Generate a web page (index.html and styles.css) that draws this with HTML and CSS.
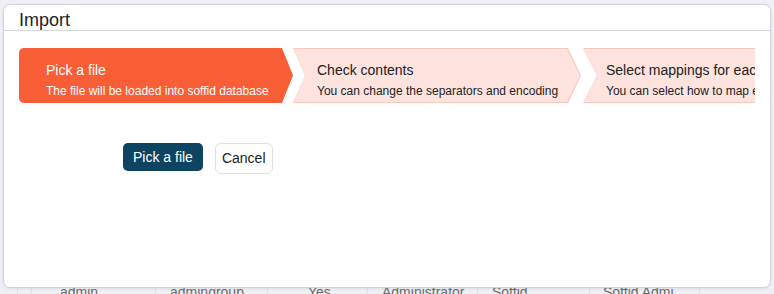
FILE: index.html
```html
<!DOCTYPE html>
<html>
<head>
<meta charset="utf-8">
<link rel="stylesheet" href="styles.css">
</head>
<body>
<div class="page">
  <div class="topline"></div>
  <div class="table-row">
    <div class="cell c0"></div>
    <div class="cell c1"></div>
    <div class="cell c2">admin</div>
    <div class="cell c3">admingroup</div>
    <div class="cell c4">Yes</div>
    <div class="cell c5">Administrator</div>
    <div class="cell c6">Soffid</div>
    <div class="cell c7">Soffid Admi</div>
    <div class="cell c8"></div>
  </div>
</div>

<div class="modal">
  <div class="modal-header">Import</div>
  <div class="modal-body">
    <div class="steps">
      <div class="step step-active">
        <div class="step-title">Pick a file</div>
        <div class="step-sub">The file will be loaded into soffid database</div>
      </div>
      <div class="step step-pending step-mid">
        <div class="step-inner">
          <div class="step-title">Check contents</div>
          <div class="step-sub">You can change the separators and encoding</div>
        </div>
      </div>
      <div class="step step-pending step-last">
        <div class="step-inner">
          <div class="step-title">Select mappings for each column</div>
          <div class="step-sub">You can select how to map each column</div>
        </div>
      </div>
    </div>
    <div class="actions">
      <button class="btn btn-primary">Pick a file</button>
      <button class="btn btn-default">Cancel</button>
    </div>
  </div>
</div>
</body>
</html>
```

FILE: styles.css
```css
html, body {
  margin: 0;
  padding: 0;
}
body {
  width: 774px;
  height: 294px;
  overflow: hidden;
  background: #eef0f5;
  font-family: "Liberation Sans", Arial, sans-serif;
}
.page {
  height: 294px;
  display: flex;
  flex-direction: column;
}
.topline {
  height: 3px;
  background: #e3e5ea;
}
.table-row {
  margin-top: 282px;
  display: flex;
  height: 20px;
  font-size: 14px;
  color: #6b6b6b;
  line-height: 20px;
}
.cell {
  border-right: 1px solid #dfe2e8;
  box-sizing: border-box;
  white-space: nowrap;
  overflow: hidden;
}
.c0 { width: 18px; }
.c1 { width: 14px; }
.c2 { width: 124px; padding-left: 28px; }
.c3 { width: 112px; padding-left: 14px; }
.c4 { width: 100px; padding-left: 40px; }
.c5 { width: 110px; padding-left: 14px; }
.c6 { width: 112px; padding-left: 14px; }
.c7 { width: 110px; padding-left: 13px; }
.c8 { width: 74px; border-right: none; }

.modal {
  position: absolute;
  left: 3px;
  top: 4px;
  width: 768px;
  height: 284px;
  box-sizing: border-box;
  background: #fff;
  border: 1px solid #d2d4d8;
  border-radius: 7px;
  box-shadow: 0 1px 3px rgba(0,0,0,0.08);
  overflow: hidden;
}
.modal-header {
  height: 26px;
  box-sizing: border-box;
  padding-top: 3px;
  line-height: 24px;
  padding-left: 15px;
  font-size: 18px;
  color: #222;
  border-bottom: 1px solid #d6d8dc;
}
.modal-body {
  padding: 17px 0 0 15px;
}
.steps {
  display: flex;
  width: 736px;
  height: 55px;
  overflow: hidden;
}
.step {
  flex: none;
  height: 55px;
  box-sizing: border-box;
  display: flex;
  flex-direction: column;
}
.step-title {
  font-size: 14px;
  line-height: 18px;
}
.step-sub {
  font-size: 12px;
  line-height: 16px;
  margin-top: 4px;
  white-space: nowrap;
}
.step-active {
  width: 274px;
  background: #fa5e37;
  color: #fff;
  padding-left: 27px;
  padding-top: 13px;
  border-radius: 5px 0 0 5px;
  clip-path: polygon(0 0, calc(100% - 11px) 0, 100% 50%, calc(100% - 11px) 100%, 0 100%);
}
.step-pending {
  background: #f9c8bb;
  padding: 1px;
  color: #222;
}
.step-inner {
  height: 100%;
  box-sizing: border-box;
  padding-top: 12px;
  background: #fee3de;
  display: flex;
  flex-direction: column;
  white-space: nowrap;
}
.step-mid {
  width: 288px;
  margin-right: 2px;
  clip-path: polygon(0 0, calc(100% - 13px) 0, 100% 50%, calc(100% - 13px) 100%, 0 100%, 12px 50%);
}
.step-mid .step-inner {
  padding-left: 23px;
  clip-path: polygon(0 0, calc(100% - 13px) 0, 100% 50%, calc(100% - 13px) 100%, 0 100%, 11px 50%);
}
.step-last {
  width: 300px;
  clip-path: polygon(0 0, 100% 0, 100% 100%, 0 100%, 14px 50%);
}
.step-last .step-inner {
  padding-left: 22px;
  clip-path: polygon(0 0, 100% 0, 100% 100%, 0 100%, 13px 50%);
}
.actions {
  display: flex;
  align-items: flex-start;
  gap: 12px;
  margin-top: 40px;
  padding-left: 104px;
}
.btn {
  font-family: "Liberation Sans", Arial, sans-serif;
  font-size: 14px;
  margin: 0;
  cursor: pointer;
}
.btn-primary {
  height: 28px;
  padding: 0 10px;
  background: #0c4462;
  color: #fff;
  border: none;
  border-radius: 5px;
}
.btn-default {
  height: 31px;
  padding: 0 6px 2px;
  background: #fff;
  color: #222;
  border: 1px solid #e0e0e0;
  border-radius: 6px;
}
```
